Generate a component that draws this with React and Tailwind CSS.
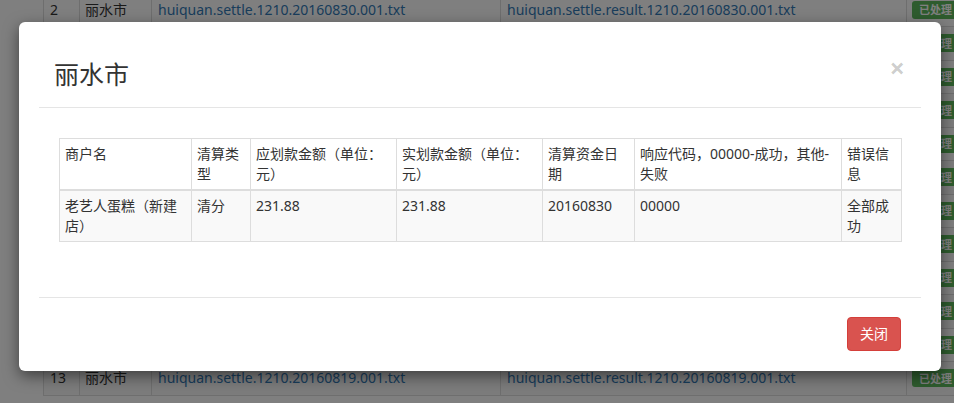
import React from "react";

const rows = Array.from({ length: 12 }, (_, i) => {
  const n = i + 2;
  const day = 30 - i;
  const date = `201608${String(day).padStart(2, "0")}`;
  return { n, date };
});

function BgRow({ n, date, striped }) {
  return (
    <div
      className={`flex h-[33.5px] items-center border-b border-[#ddd] ${
        striped ? "bg-[#f9f9f9]" : "bg-white"
      }`}
    >
      <div className="flex h-full w-[37px] shrink-0 items-center border-x border-[#ddd] px-[6px]">
        {n}
      </div>
      <div className="flex h-full w-[72px] shrink-0 items-center border-r border-[#ddd] px-[5px]">
        丽水市
      </div>
      <div className="flex h-full w-[349px] shrink-0 items-center border-r border-[#ddd] px-[6px] text-[#337ab7]">
        huiquan.settle.1210.{date}.001.txt
      </div>
      <div className="flex h-full w-[406px] shrink-0 items-center border-r border-[#ddd] px-[6px] text-[#337ab7]">
        huiquan.settle.result.1210.{date}.001.txt
      </div>
      <div className="flex h-full w-[80px] shrink-0 items-center px-[5px]">
        <span className="rounded-[3px] bg-[#5cb85c] px-[7px] py-[3.5px] text-[11px] font-bold leading-[11px] text-white">
          已处理
        </span>
      </div>
    </div>
  );
}

export default function App() {
  const font = "font-['Noto_Sans','Noto_Sans_CJK_SC',sans-serif]";
  return (
    <div
      className={`relative h-[403px] w-[954px] overflow-hidden bg-white text-[14px] leading-5 text-[#333] ${font}`}
    >
      {/* page behind the dialog */}
      <div className="mt-[-6.5px] ml-[43px] w-[1000px]">
        {rows.map((r, i) => (
          <BgRow key={r.n} n={r.n} date={r.date} striped={i % 2 === 1} />
        ))}
      </div>

      {/* backdrop */}
      <div className="absolute inset-0 bg-black/50" />

      {/* dialog */}
      <div className="absolute left-[19px] top-[22px] w-[922px] rounded-[6px] bg-white px-5 shadow-[0_5px_15px_rgba(0,0,0,0.5)]">
        <div className="flex h-[86px] items-start justify-between border-b border-[#e5e5e5]">
          <h3 className="ml-[15px] mt-[34px] text-[25px] leading-[36px] font-normal text-[#333]">
            丽水市
          </h3>
          <button className="mr-[16px] mt-[32px] text-[27px] font-bold leading-[27px] text-black/20">
            ×
          </button>
        </div>

        <div className="px-5 pb-[55px] pt-[30px]">
          <table className="w-full table-fixed border-collapse border border-[#ddd] text-left">
            <colgroup>
              <col className="w-[132px]" />
              <col className="w-[59px]" />
              <col className="w-[146px]" />
              <col className="w-[146px]" />
              <col className="w-[92px]" />
              <col className="w-[207px]" />
              <col className="w-[60px]" />
            </colgroup>
            <thead>
              <tr>
                {[
                  "商户名",
                  "清算类型",
                  "应划款金额（单位：元）",
                  "实划款金额（单位：元）",
                  "清算资金日期",
                  "响应代码，00000-成功，其他-失败",
                  "错误信息",
                ].map((h) => (
                  <th
                    key={h}
                    className="border border-b-2 border-[#ddd] p-[5px] align-top font-normal"
                  >
                    {h}
                  </th>
                ))}
              </tr>
            </thead>
            <tbody>
              <tr className="bg-[#f9f9f9]">
                {[
                  "老艺人蛋糕（新建店）",
                  "清分",
                  "231.88",
                  "231.88",
                  "20160830",
                  "00000",
                  "全部成功",
                ].map((c, i) => (
                  <td key={i} className="border border-[#ddd] p-[5px] align-top">
                    {c}
                  </td>
                ))}
              </tr>
            </tbody>
          </table>
        </div>

        <div className="flex justify-end border-t border-[#e5e5e5] px-5 pb-5 pt-[19px]">
          <button className="rounded-[4px] border border-[#d43f3a] bg-[#d9534f] px-3 py-[6px] text-[14px] leading-5 text-white">
            关闭
          </button>
        </div>
      </div>
    </div>
  );
}
